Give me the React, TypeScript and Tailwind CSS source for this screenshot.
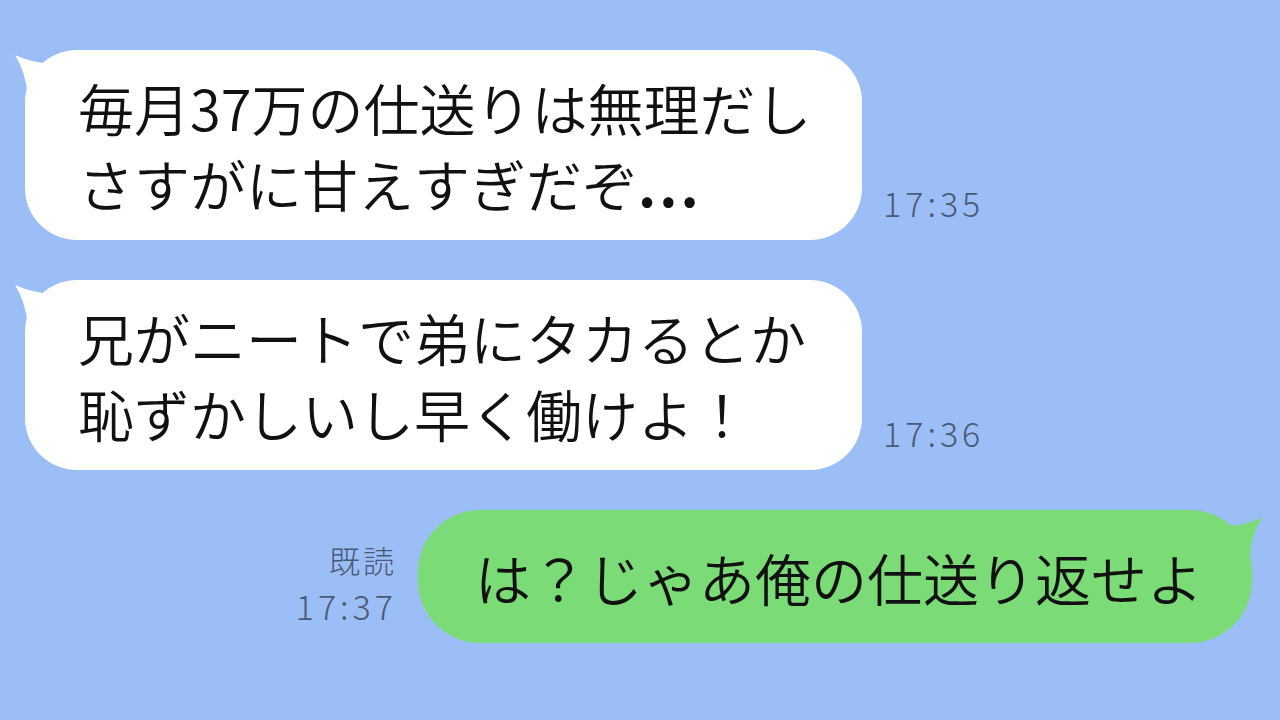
const font = { fontFamily: '"Noto Sans CJK JP", "Noto Sans", sans-serif' }

const LeftTail = () => (
  <svg className="absolute left-[-12px] top-0" width="50" height="50" viewBox="0 0 50 50">
    <path d="M2 5 Q20 13 40 14 L40 48 L15 48 Q13 22 2 5 Z" fill="#ffffff" />
  </svg>
)

const RightTail = () => (
  <svg className="absolute right-[-14px] top-0" width="50" height="50" viewBox="0 0 50 50">
    <path d="M47 7 Q30 16 8 16 L8 48 L34 48 Q35 22 47 7 Z" fill="#7bdb77" />
  </svg>
)

const Incoming = ({ lines, time }: { lines: React.ReactNode[]; time: string }) => (
  <div className="flex items-end pl-[25px]">
    <div className="relative flex h-[190px] w-[837px] flex-col justify-center rounded-[52px] bg-white pl-[53px]">
      <LeftTail />
      {lines.map((l, i) => (
        <div key={i} className="relative text-[56px] font-[350] leading-[76px] text-[#111]">{l}</div>
      ))}
    </div>
    <div className="mb-[20px] ml-[21px] text-[34px] font-light leading-none tracking-[4px] text-[#4a5a74]">{time}</div>
  </div>
)

export default function App() {
  return (
    <div style={font} className="flex h-[720px] w-[1280px] flex-col gap-[40px] overflow-hidden bg-[#9cbef7] pt-[50px]">
      <Incoming
        lines={[
          "毎月37万の仕送りは無理だし",
          <>さすがに甘えすぎだぞ<span className="font-bold tracking-[3px]">...</span></>,
        ]}
        time="17:35"
      />
      <Incoming lines={["兄がニートで弟にタカるとか", "恥ずかしいし早く働けよ！"]} time="17:36" />
      <div className="flex items-end justify-end pr-[28px]">
        <div className="mb-[20px] mr-[21px] flex flex-col items-end font-light leading-none text-[#4a5a74]">
          <div className="text-[31px] tracking-[3px]">既読</div>
          <div className="mt-[14px] text-[34px] tracking-[4px]">17:37</div>
        </div>
        <div className="relative flex h-[133px] w-[834px] items-center rounded-[62px] bg-[#7bdb77] pl-[57px]">
          <RightTail />
          <div className="relative text-[56px] font-[350] leading-[76px] text-[#111]">は？じゃあ俺の仕送り返せよ</div>
        </div>
      </div>
    </div>
  )
}
